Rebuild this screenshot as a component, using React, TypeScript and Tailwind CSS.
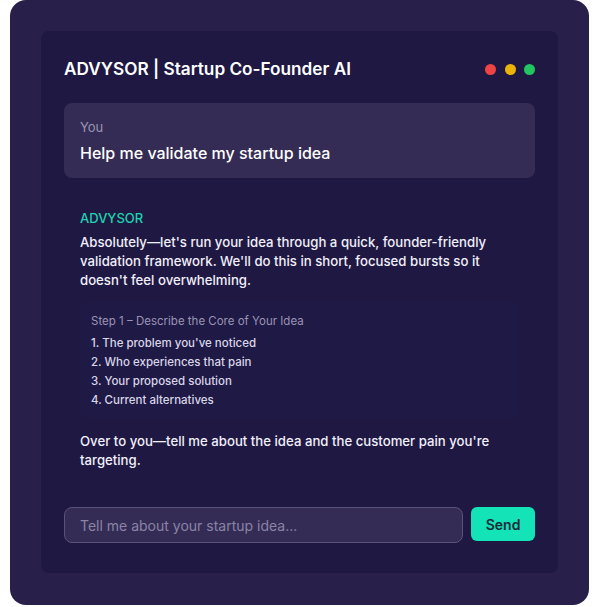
const steps = [
  '1. The problem you\'ve noticed',
  '2. Who experiences that pain',
  '3. Your proposed solution',
  '4. Current alternatives',
]

export default function App() {
  return (
    <div className="h-[607px] w-[607px] bg-white font-['Inter',sans-serif]">
      <div className="ml-[10px] h-[605px] w-[579px] rounded-[16px] bg-[#28204a] pl-[31px] pt-[31px]">
        <div className="flex h-[542px] w-[517px] flex-col rounded-[8px] bg-[#1e1842] px-[23px]">
          <div className="flex h-[72px] items-center justify-between pt-[4px]">
            <h1 className="text-[17.2px] font-semibold text-white">ADVYSOR | Startup Co-Founder AI</h1>
            <div className="flex gap-[8.5px] pr-0">
              <span className="h-[11px] w-[11px] rounded-full bg-[#ef4444]" />
              <span className="h-[11px] w-[11px] rounded-full bg-[#eab308]" />
              <span className="h-[11px] w-[11px] rounded-full bg-[#22c55e]" />
            </div>
          </div>

          <div className="h-[75px] rounded-[8px] bg-[#342c55] px-[16px] pt-[15px]">
            <div className="text-[13px] leading-[18px] text-[#9a94b4]">You</div>
            <div className="mt-[7px] text-[16px] font-medium leading-[20px] text-white">
              Help me validate my startup idea
            </div>
          </div>

          <div className="mt-[31px] px-[16px]">
            <div className="text-[13px] font-medium leading-[18px] text-[#1fd3b0]">ADVYSOR</div>
            <p className="mt-[6px] text-[13.2px] font-medium leading-[19px] text-[#f1effa]">
              Absolutely—let's run your idea through a quick, founder-friendly validation framework. We'll do this in
              short, focused bursts so it doesn't feel overwhelming.
            </p>
            <div className="mt-[12px] rounded-[6px] bg-[#1f1945] px-[11px] pb-[8px] pt-[11px]">
              <div className="text-[11.5px] leading-[16px] text-[#9a94b4]">Step 1 – Describe the Core of Your Idea</div>
              <ul className="mt-[5px] text-[11.5px] font-medium text-[#d9d6e8]">
                {steps.map((s) => (
                  <li key={s} className="leading-[19px]">
                    {s}
                  </li>
                ))}
              </ul>
            </div>
            <p className="mt-[14px] text-[13.2px] font-medium leading-[19px] text-[#f1effa]">
              Over to you—tell me about the idea and the customer pain you're targeting.
            </p>
          </div>

          <div className="mt-[37px] flex items-start gap-[8px]">
            <input
              placeholder="Tell me about your startup idea..."
              className="h-[36px] w-[400px] rounded-[8px] border border-[#5a5278] bg-[#342c55] px-[15px] text-[14px] text-white outline-none placeholder:text-[#8a84a6]"
            />
            <button className="h-[34px] w-[64px] rounded-[6px] bg-[#14e3b8] text-[14px] font-semibold text-[#1a2a3a]">
              Send
            </button>
          </div>
        </div>
      </div>
    </div>
  )
}
